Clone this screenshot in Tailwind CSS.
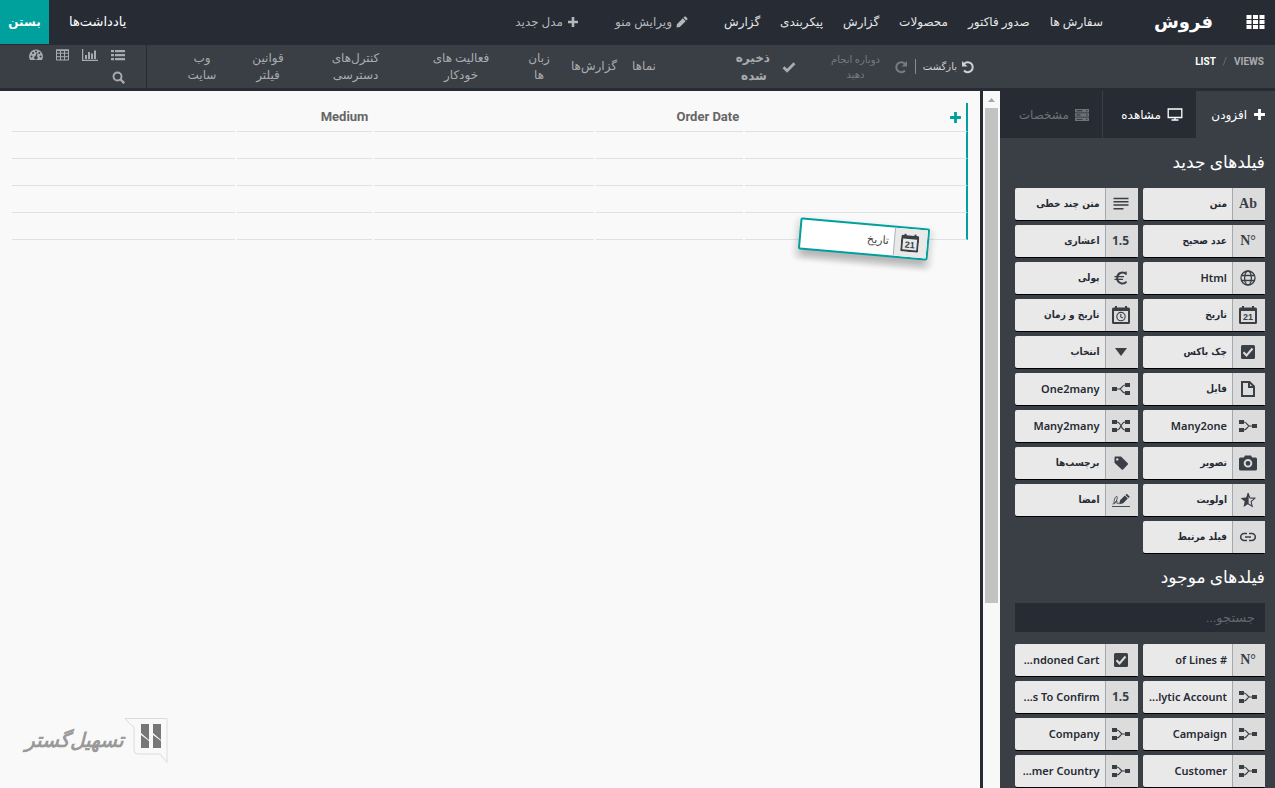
<!DOCTYPE html>
<html lang="fa" dir="rtl">
<head>
    <meta charset="UTF-8">
    <meta name="viewport" content="width=device-width, initial-scale=1.0">
    <title>فروش</title>
    <script src="https://cdn.jsdelivr.net/npm/@tailwindcss/browser@4"></script>
</head>
<body class="flex h-screen flex-col overflow-hidden bg-[#262b34] font-['Roboto','DejaVu_Sans',sans-serif] text-xs text-white">

    <!-- Icon sprite -->
    <svg class="hidden" aria-hidden="true">
        <symbol id="i-apps" viewBox="0 0 18 14"><path fill="currentColor" d="M0 0h5v4H0zM6.500 0h5v4h-5zM13 0h5v4h-5zM0 5h5v4H0zM6.500 5h5v4h-5zM13 5h5v4h-5zM0 10h5v4H0zM6.500 10h5v4h-5zM13 10h5v4h-5z"/></symbol>
        <symbol id="i-plus" viewBox="0 0 12 12"><path fill="currentColor" d="M4.700 1h2.600v3.700H11v2.600H7.300V11H4.700V7.300H1V4.700h3.700z"/></symbol>
        <symbol id="i-pencil" viewBox="0 0 12 12"><path fill="currentColor" d="M8.400.7a1 1 0 0 1 1.400 0l1.500 1.500a1 1 0 0 1 0 1.400l-1 1-2.900-2.900zM6.800 2.300l2.900 2.900-5.900 5.900L.5 11.500.9 8.200z"/></symbol>
        <symbol id="i-undo" viewBox="0 0 14 14"><path fill="none" stroke="currentColor" stroke-width="2" d="M3 3.800A5 5 0 1 1 3 10.500"/><path fill="currentColor" d="M1 1v5.500h5.500z"/></symbol>
        <symbol id="i-redo" viewBox="0 0 14 14"><path fill="none" stroke="currentColor" stroke-width="2" d="M11 3.800A5 5 0 1 0 11 10.500"/><path fill="currentColor" d="M13 1v5.500H7.500z"/></symbol>
        <symbol id="i-check" viewBox="0 0 14 12"><path fill="none" stroke="currentColor" stroke-width="2.800" d="M1.500 6.200l3.600 3.600 7.400-7.600"/></symbol>
        <symbol id="i-list" viewBox="0 0 14 12"><path fill="currentColor" d="M0 1h3v2.200H0zM4 1h10v2.200H4zM0 5h3v2.200H0zM4 5h10v2.200H4zM0 9h3v2.200H0zM4 9h10v2.200H4z"/></symbol>
        <symbol id="i-chart" viewBox="0 0 16 12"><path fill="currentColor" d="M0 0h1.200v10.800H16V12H0zM3 6h2v4H3zM6 3h2v7H6zM9 4.500h2V10H9zM12 1.500h2V10h-2z"/></symbol>
        <symbol id="i-table" viewBox="0 0 13 12"><path fill="none" stroke="currentColor" d="M.5 1h12v10H.5zM.5 4.200h12M.5 7.700h12M4.500 1v10M8.500 1v10"/><path fill="currentColor" d="M0 .5h13v1.500H0z"/></symbol>
        <symbol id="i-gauge" viewBox="0 0 14 12"><path fill="currentColor" fill-rule="evenodd" d="M7 .5a7 7 0 0 1 5.900 10.600H1.100A7 7 0 0 1 7 .5zM2.500 6.500a1 1 0 1 0 0 2 1 1 0 0 0 0-2zM4 3a1 1 0 1 0 0 2 1 1 0 0 0 0-2zM7 1.600a1 1 0 1 0 0 2 1 1 0 0 0 0-2zM10.300 3a1 1 0 1 0 0 2 1 1 0 0 0 0-2zM11.600 6.500a1 1 0 1 0 0 2 1 1 0 0 0 0-2zM7.400 4.200L6.600 7a1.700 1.700 0 1 0 1.300.3l.7-2.700z"/></symbol>
        <symbol id="i-search" viewBox="0 0 13 13"><circle cx="5.500" cy="5.500" r="4" fill="none" stroke="currentColor" stroke-width="1.900"/><path stroke="currentColor" stroke-width="2.300" d="M8.300 8.300l3.900 3.900"/></symbol>
        <symbol id="i-screen" viewBox="0 0 16 13"><path fill="none" stroke="currentColor" stroke-width="1.300" d="M1.200 1h13.600v8.500H1.200zM8 9.500v2M4.500 12h7"/></symbol>
        <symbol id="i-server" viewBox="0 0 14 12"><path fill="currentColor" fill-rule="evenodd" d="M0 0h14v3.400H0zM0 4.300h14v3.400H0zM0 8.600h14V12H0zM1.500 1.300v.9h6v-.9zM11 1.300v.9h1.500v-.9zM1.500 5.600v.9h4v-.9zM11 5.600v.9h1.500v-.9zM1.500 9.900v.9h6v-.9zM11 9.900v.9h1.500v-.9z"/></symbol>

        <!-- Field type icons -->
        <symbol id="f-lines" viewBox="0 0 18 18"><path stroke="currentColor" stroke-width="1.500" d="M1.500 3.500h15M1.500 6.800h15M1.500 10.100h15M1.500 13.700h10"/></symbol>
        <symbol id="f-globe" viewBox="0 0 18 18"><g fill="none" stroke="currentColor" stroke-width="1.300"><circle cx="9" cy="9" r="7"/><ellipse cx="9" cy="9" rx="3.400" ry="7"/><path d="M2.500 6.500h13M2.500 11.500h13"/></g></symbol>
        <symbol id="f-euro" viewBox="0 0 18 18"><path fill="none" stroke="currentColor" stroke-width="2" d="M14 4.800A5.300 5.300 0 0 0 5.200 9a5.300 5.300 0 0 0 9.300 3.600"/><path stroke="currentColor" stroke-width="1.300" d="M2.500 7.700h9.500M2.500 10.300h8.500M14 2.500v3.500"/></symbol>
        <symbol id="f-date" viewBox="0 0 18 18"><path fill="currentColor" fill-rule="evenodd" d="M3 0h2v1.500h8V0h2v1.500h1.500A1.500 1.500 0 0 1 18 3v13.500a1.500 1.500 0 0 1-1.500 1.500h-15A1.500 1.500 0 0 1 0 16.500V3a1.500 1.500 0 0 1 1.500-1.500H3zM2 5v11h14V5z"/><text x="9" y="14" direction="ltr" text-anchor="middle" fill="currentColor" font-family="Liberation Sans" font-weight="700" font-size="9">21</text></symbol>
        <symbol id="f-datetime" viewBox="0 0 18 18"><path fill="currentColor" fill-rule="evenodd" d="M3 0h2v1.500h8V0h2v1.500h1.500A1.500 1.500 0 0 1 18 3v13.500a1.500 1.500 0 0 1-1.500 1.500h-15A1.500 1.500 0 0 1 0 16.500V3a1.500 1.500 0 0 1 1.500-1.500H3zM2 5v11h14V5z"/><g fill="none" stroke="currentColor" stroke-width="1.100"><circle cx="9" cy="10.600" r="4.200"/><path d="M8.800 8v2.900l2.200 1"/></g></symbol>
        <symbol id="f-check" viewBox="0 0 18 18"><rect x="2" y="2" width="14" height="14" rx="1.500" fill="currentColor"/><path fill="none" stroke="#ddd" stroke-width="2" d="M4.500 9.300l3 3.200 6-7"/></symbol>
        <symbol id="f-select" viewBox="0 0 18 18"><path fill="currentColor" d="M3 5h12l-6 8z"/></symbol>
        <symbol id="f-file" viewBox="0 0 18 18"><path fill="none" stroke="currentColor" stroke-width="2" d="M3 2h7.500L15 6.500V16H3zM10 2v5h5"/></symbol>
        <symbol id="f-o2m" viewBox="0 0 18 18"><path fill="currentColor" d="M0 7h5v4H0zM13 3h5v4h-5zM13 11h5v4h-5z"/><path fill="none" stroke="currentColor" stroke-width="1.200" d="M5 9h2.500c2 0 2.500-4 5.500-4M7.500 9c2 0 2.500 4 5.500 4"/></symbol>
        <symbol id="f-m2o" viewBox="0 0 18 18"><path fill="currentColor" d="M13 7h5v4h-5zM0 3h5v4H0zM0 11h5v4H0z"/><path fill="none" stroke="currentColor" stroke-width="1.200" d="M13 9h-2.500C8.500 9 8 5 5 5M10.500 9c-2 0-2.500 4-5.500 4"/></symbol>
        <symbol id="f-m2m" viewBox="0 0 18 18"><path fill="currentColor" d="M0 3h5v4H0zM0 11h5v4H0zM13 3h5v4h-5zM13 11h5v4h-5z"/><path fill="none" stroke="currentColor" stroke-width="1.200" d="M5 5c4 0 4 8 8 8M5 13c4 0 4-8 8-8"/></symbol>
        <symbol id="f-camera" viewBox="0 0 18 18"><path fill="currentColor" fill-rule="evenodd" d="M6 1.500h6l1.200 2H16.500A1.500 1.500 0 0 1 18 5v10a1.500 1.500 0 0 1-1.500 1.500h-15A1.500 1.500 0 0 1 0 15V5a1.500 1.500 0 0 1 1.500-1.500h3.300zM9 5a4.300 4.300 0 1 0 0 8.600A4.300 4.300 0 0 0 9 5zm0 1.900a2.400 2.400 0 1 1 0 4.800 2.400 2.400 0 0 1 0-4.800z"/></symbol>
        <symbol id="f-tag" viewBox="0 0 18 18"><path fill="currentColor" fill-rule="evenodd" d="M2.500 3.500a1 1 0 0 1 1-1H9l6.800 6.700a1 1 0 0 1 0 1.400l-4.700 4.800a1 1 0 0 1-1.400 0L2.500 8.700zM5.300 4.200a1.200 1.200 0 1 0 0 2.400 1.200 1.200 0 0 0 0-2.400z"/></symbol>
        <symbol id="f-star" viewBox="0 0 18 18"><path fill="none" stroke="currentColor" stroke-width="1.100" d="M9 2.300l1.900 4.600 4.900.4-3.700 3.200 1.100 4.800L9 12.800z"/><path fill="currentColor" d="M9.200 1.200v11.900l-4.700 2.900 1.200-5.400-4.100-3.600 5.500-.5z"/></symbol>
        <symbol id="f-sign" viewBox="0 0 18 18"><path fill="none" stroke="currentColor" stroke-width=".9" d="M0 15.500h18M.5 13c3 0 5.500-5.500 4.500-7.500C3.500 5 2 8.500 2 11.500c0 1.500 1.200 1.500 2.300-.8.700-1 1.300-.4.700.8-.3.900.2 1.300 1.500.8l1-.5"/><path fill="currentColor" d="M14.800 2.700l3 3-1.300 1.300-3-3zM12.800 4.600l3 3-4.600 4.700-4 .9.900-4z"/></symbol>
        <symbol id="f-link" viewBox="0 0 18 18"><path fill="none" stroke="currentColor" stroke-width="1.600" d="M8 5.500H5.200a3.500 3.500 0 0 0 0 7H8M10 5.500h2.800a3.500 3.500 0 0 1 0 7H10M6 9h6"/></symbol>
    </svg>

    <!-- Top navigation -->
    <header class="flex h-11 shrink-0 items-center justify-between">
        <div class="flex items-center">
            <button class="ms-[10px] h-11 w-5" aria-label="برنامه‌ها"><svg class="h-[14px] w-[19px]"><use href="#i-apps"/></svg></button>
            <h1 class="ms-8 w-[54px] text-lg leading-8 font-bold whitespace-nowrap">فروش</h1>
            <nav class="ms-14 flex gap-5 text-xs leading-5 whitespace-nowrap text-[#e5e6e7]">
                <a href="#">سفارش ها</a>
                <a href="#">صدور فاکتور</a>
                <a href="#">محصولات</a>
                <a href="#">گزارش</a>
                <a href="#">پیکربندی</a>
                <a href="#">گزارش</a>
            </nav>
            <div class="ms-9 flex gap-9 text-xs whitespace-nowrap text-[#b5b7ba]">
                <button class="flex items-center gap-1"><svg class="size-3"><use href="#i-pencil"/></svg>ویرایش منو</button>
                <button class="flex items-center gap-1"><svg class="size-3"><use href="#i-plus"/></svg>مدل جدید</button>
            </div>
        </div>
        <div class="flex items-center gap-5 text-[13px]">
            <a href="#" class="whitespace-nowrap">یادداشت‌ها</a>
            <button class="h-11 w-[49px] bg-[#00a09d] text-xs font-bold">بستن</button>
        </div>
    </header>

    <!-- Studio toolbar -->
    <div class="mt-px mb-[3px] flex h-[43px] shrink-0 bg-[#3a3f46] text-[#a9abae]">
        <div class="flex w-[275px] shrink-0 gap-[7px] ps-[11px] pt-[10px] text-[10px] leading-[14px] font-bold">
            <a href="#">VIEWS</a>
            <span class="font-normal text-[#6f7479]">/</span>
            <a href="#" class="text-white">LIST</a>
        </div>
        <div class="flex w-[265px] shrink-0 items-center ps-[25px] text-[10px] leading-[15px]">
            <button class="flex w-[50px] shrink-0 items-center gap-1 font-medium whitespace-nowrap text-[#d0d1d3]"><svg class="size-[14px] shrink-0"><use href="#i-undo"/></svg>بازگشت</button>
            <span class="ms-[9px] h-[15px] w-px shrink-0 bg-[#8a8c8f]"></span>
            <button class="ms-[7px] flex w-[80px] shrink-0 items-center gap-[11px] text-[#777a7e]"><svg class="size-[14px] shrink-0"><use href="#i-redo"/></svg><span class="w-[56px] text-center">دوباره انجام دهید</span></button>
            <span class="ms-8 flex items-center gap-3 text-xs leading-[18px] font-bold"><svg class="h-3 w-[14px] shrink-0"><use href="#i-check"/></svg><span class="w-8 text-center">ذخیره شده</span></span>
        </div>
        <nav class="flex flex-1 items-center justify-end text-center text-xs leading-[17px]">
            <a href="#" class="w-[44px] whitespace-nowrap">نماها</a>
            <a href="#" class="w-[56px] whitespace-nowrap">گزارش‌ها</a>
            <a href="#" class="w-[54px]">زبان<br>ها</a>
            <a href="#" class="w-[102px]">فعالیت های<br>خودکار</a>
            <a href="#" class="w-[109px]">کنترل‌های<br>دسترسی</a>
            <a href="#" class="w-[66px]">قوانین<br>فیلتر</a>
            <a href="#" class="me-[22px] w-[66px]">وب<br>سایت</a>
        </nav>
        <div class="flex w-[147px] shrink-0 flex-wrap content-start gap-x-[13px] gap-y-[10px] border-s border-[#262b34] ps-[21px] pe-6 pt-1">
            <button aria-label="List"><svg class="h-3 w-[14px]"><use href="#i-list"/></svg></button>
            <button aria-label="Graph"><svg class="h-3 w-4"><use href="#i-chart"/></svg></button>
            <button aria-label="Pivot"><svg class="h-3 w-[13px]"><use href="#i-table"/></svg></button>
            <button aria-label="Dashboard"><svg class="h-3 w-[14px]"><use href="#i-gauge"/></svg></button>
            <button aria-label="Search"><svg class="size-[13px]"><use href="#i-search"/></svg></button>
        </div>
    </div>

    <div class="flex min-h-0 flex-1">
        <!-- Sidebar -->
        <aside class="w-[275px] shrink-0 overflow-hidden bg-[#3a3f46]">
            <div class="flex h-[47px] text-xs whitespace-nowrap">
                <button class="flex w-[79px] items-center gap-[6px] ps-[9px]"><svg class="size-[13px] shrink-0"><use href="#i-plus"/></svg>افزودن</button>
                <button class="flex w-[93px] items-center gap-[6px] bg-[#262b34] ps-[13px] font-medium"><svg class="h-[13px] w-4 shrink-0"><use href="#i-screen"/></svg>مشاهده</button>
                <button class="ms-px flex flex-1 items-center gap-[6px] bg-[#262b34] ps-[13px] text-[#6f7377]"><svg class="h-3 w-[14px] shrink-0"><use href="#i-server"/></svg>مشخصات</button>
            </div>
            <div class="ps-[10px] pe-[15px]">
                <h2 class="pt-3 text-[17px] leading-6">فیلدهای جدید</h2>
                <ul id="newFields" class="mt-[14px] grid grid-cols-2 gap-[5px] text-[11px] font-semibold text-[#262b34]"></ul>
                <h2 class="pt-3 text-[17px] leading-6">فیلدهای موجود</h2>
                <input type="search" aria-label="جستجو" placeholder="جستجو..." class="mt-[14px] block h-[29px] w-full bg-[#262b34] px-[10px] text-[13px] placeholder:text-[#62666b]">
                <ul id="existingFields" class="mt-3 grid grid-cols-2 gap-[5px] text-[11px] font-semibold text-[#262b34]"></ul>
            </div>
        </aside>

        <!-- Scrollbar of the view -->
        <div class="flex w-[17px] shrink-0 flex-col items-center bg-[#f8f8f8]">
            <svg class="h-[17px] w-[9px] shrink-0" viewBox="0 0 9 17"><path fill="#a3a6ad" d="M1 11h7L4.500 7z"/></svg>
            <div class="h-[71%] w-[13px] bg-[#c1c2c2]"></div>
        </div>

        <!-- List view -->
        <main class="relative ms-[3px] flex-1 bg-[#f9f9f9] px-[10px] pt-3 text-[#666]">
            <table class="w-full table-fixed border-separate border-spacing-x-[2px] border-spacing-y-0 text-[13px]">
                <colgroup>
                    <col class="w-[23.500%]"><col class="w-[15.500%]"><col class="w-[23.200%]"><col class="w-[14.300%]"><col class="w-[23.500%]">
                </colgroup>
                <thead>
                    <tr class="h-[29px] *:border-b *:border-[#dee2e6] *:px-1 *:font-bold">
                        <th class="border-s-2 border-s-[#00a09d]!"><button aria-label="افزودن ستون" class="block text-[#00a09d]"><svg class="size-[13px]"><use href="#i-plus"/></svg></button></th>
                        <th class="text-right">Order Date</th>
                        <th></th>
                        <th class="text-right">Medium</th>
                        <th></th>
                    </tr>
                </thead>
                <tbody id="rows"></tbody>
            </table>

            <!-- Field being dragged -->
            <div class="absolute top-[132px] left-[799px] flex h-8 w-[130px] rotate-5 rounded-xs border-2 border-[#00a09d] bg-white text-[11px] text-[#444] shadow-[0_8px_6px_-2px_rgba(0,0,0,0.22),0_5px_4px_5px_rgba(0,0,0,0.07)]">
                <span class="flex w-[33px] items-center justify-center border-e border-[#adb5bd] bg-[#e9e9e9] ps-[2px] text-[#3a3f46]"><svg class="size-[18px]"><use href="#f-date"/></svg></span>
                <span class="flex flex-1 items-center px-[5px]">تاریخ</span>
            </div>

            <!-- Company logo -->
            <div class="absolute bottom-6 left-6 flex items-start">
                <svg class="h-[46px] w-11" viewBox="0 0 44 46"><path fill="none" stroke="#ddd" d="M1 .5h42v44L36 36H14q-4 0-4-4V9L7 7z"/><path fill="#777" d="M17 6h8v16l-8-7zM17 17l8 6v7h-8zM29 6h8v16l-8-7zM29 17l8 6v7h-8z"/></svg>
                <span class="w-[100px] pt-[6px] text-center text-xl leading-8 font-bold whitespace-nowrap text-[#999] italic">تسهیل‌گستر</span>
            </div>
        </main>
    </div>

    <script>
        const newFields = [
            ['Ab', 'متن'], ['f-lines', 'متن چند خطی'],
            ['N°', 'عدد صحیح'], ['1.5', 'اعشاری'],
            ['f-globe', 'Html'], ['f-euro', 'پولی'],
            ['f-date', 'تاریخ'], ['f-datetime', 'تاریخ و زمان'],
            ['f-check', 'چک باکس'], ['f-select', 'انتخاب'],
            ['f-file', 'فایل'], ['f-o2m', 'One2many'],
            ['f-m2o', 'Many2one'], ['f-m2m', 'Many2many'],
            ['f-camera', 'تصویر'], ['f-tag', 'برچسب‌ها'],
            ['f-star', 'اولویت'], ['f-sign', 'امضا'],
            ['f-link', 'فیلد مرتبط']
        ];
        const existingFields = [
            ['N°', '# of Lines'], ['f-check', 'ndoned Cart...'],
            ['f-m2o', 'lytic Account...'], ['1.5', 's To Confirm...'],
            ['f-m2o', 'Campaign'], ['f-m2o', 'Company'],
            ['f-m2o', 'Customer'], ['f-m2o', 'mer Country...']
        ];

        function fieldIcon(icon) {
            if (icon.startsWith('f-')) return `<svg class="size-[18px]"><use href="#${icon}"/></svg>`;
            if (icon === '1.5') return `<span class="text-xs font-bold font-['Noto_Sans']">1.5</span>`;
            return `<span dir="ltr" class="text-sm font-bold font-['Liberation_Serif']">${icon}</span>`;
        }

        function fieldCard([icon, label]) {
            // Persian glyphs run wider than the Latin ones
            const font = /[a-z]/i.test(label) ? "font-['Noto_Sans']" : "font-['DejaVu_Sans_Condensed','DejaVu_Sans',sans-serif] text-[10px]";
            return `<li class="flex h-8 rounded-xs bg-[#e9e9e9] shadow-[0_1px_0_#000]">
                <span class="flex w-[33px] shrink-0 items-center justify-center border-e border-[#a2a7b0] bg-[#dcdcdc] ps-[2px] text-[#3a3f46]">${fieldIcon(icon)}</span>
                <span class="flex-1 truncate px-[5px] leading-8 ${font}">${label}</span>
            </li>`;
        }

        document.getElementById('newFields').innerHTML = newFields.map(fieldCard).join('');
        document.getElementById('existingFields').innerHTML = existingFields.map(fieldCard).join('');
        document.getElementById('rows').innerHTML = `<tr class="h-[27px] *:border-b *:border-[#dee2e6]">
            <td class="border-s-2 border-s-[#00a09d]!"></td><td></td><td></td><td></td><td></td>
        </tr>`.repeat(4);
    </script>
</body>
</html>
